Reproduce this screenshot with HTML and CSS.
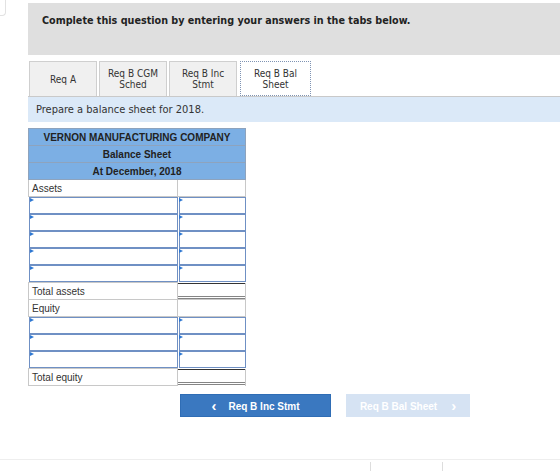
FILE: index.html
```html
<!DOCTYPE html>
<html lang="en">
<head>
  <meta charset="UTF-8">
  <title>Balance Sheet</title>
  <link rel="stylesheet" href="styles.css">
</head>
<body>

  <div class="page">
    <div class="stub"></div>

    <div class="main">
      <div class="question">Complete this question by entering your answers in the tabs below.</div>

      <div class="tabs">
        <div class="tab">Req A</div>
        <div class="tab">Req B CGM<br>Sched</div>
        <div class="tab">Req B Inc<br>Stmt</div>
        <div class="tab active">Req B Bal<br>Sheet</div>
      </div>

      <div class="instruction">Prepare a balance sheet for 2018.</div>

      <table class="sheet">
        <thead>
          <tr><th colspan="2">VERNON MANUFACTURING COMPANY</th></tr>
          <tr><th colspan="2">Balance Sheet</th></tr>
          <tr><th colspan="2">At December, 2018</th></tr>
        </thead>
        <tbody>
          <tr><td class="label">Assets</td><td class="blank"></td></tr>
          <tr><td class="field"><input type="text"></td><td class="field"><input type="text"></td></tr>
          <tr><td class="field"><input type="text"></td><td class="field"><input type="text"></td></tr>
          <tr><td class="field"><input type="text"></td><td class="field"><input type="text"></td></tr>
          <tr><td class="field"><input type="text"></td><td class="field"><input type="text"></td></tr>
          <tr><td class="field"><input type="text"></td><td class="field"><input type="text"></td></tr>
          <tr><td class="label">Total assets</td><td class="total"><input type="text" readonly></td></tr>
          <tr><td class="label">Equity</td><td class="blank"></td></tr>
          <tr><td class="field"><input type="text"></td><td class="field"><input type="text"></td></tr>
          <tr><td class="field"><input type="text"></td><td class="field"><input type="text"></td></tr>
          <tr><td class="field"><input type="text"></td><td class="field"><input type="text"></td></tr>
          <tr><td class="label">Total equity</td><td class="total"><input type="text" readonly></td></tr>
        </tbody>
      </table>

      <div class="nav">
        <button class="btn prev" type="button"><span class="chev">&lsaquo;</span>Req B Inc Stmt</button>
        <button class="btn next" type="button" disabled>Req B Bal Sheet<span class="chev">&rsaquo;</span></button>
      </div>
    </div>
  </div>

  <div class="footer">
    <div class="cell wide"></div>
    <div class="cell"></div>
    <div class="cell"></div>
  </div>

</body>
</html>
```

FILE: styles.css
```css
body {
  margin: 0;
  font-family: "DejaVu Sans Condensed", "DejaVu Sans", sans-serif;
  color: #222;
  background-color: #fff;
}

.page {
  display: flex;
  align-items: flex-start;
}

.stub {
  flex: none;
  width: 5px;
  height: 15px;
  border-right: 1px solid #e2e2e2;
  border-bottom: 1px solid #e2e2e2;
  border-radius: 0 0 4px 0;
}

.main {
  flex: 1;
  margin-left: 22px;
  margin-top: 3px;
}

.question {
  height: 52px;
  box-sizing: border-box;
  padding: 11px 14px;
  background-color: #dfdfdf;
  font-size: 10.7px;
  font-weight: bold;
}

.tabs {
  display: flex;
  gap: 2px;
  margin-top: 6px;
  padding-left: 1px;
}

.tab {
  width: 68px;
  height: 35px;
  box-sizing: border-box;
  display: flex;
  align-items: center;
  justify-content: center;
  text-align: center;
  font-size: 10px;
  line-height: 11px;
  color: #333;
  background-color: #f0f0f0;
  border: 1px solid #cfcfcf;
  border-bottom: none;
}

.tab.active {
  width: 71px;
  margin-left: 1px;
  background-color: #fff;
  border: 1px dotted #7f93b3;
}

.instruction {
  height: 26px;
  box-sizing: border-box;
  padding: 6px 8px;
  background-color: #dbe9f8;
  border-top: 1px solid #c9c9c9;
  font-size: 11px;
  color: #333;
}

.sheet {
  margin-top: 6px;
  border-collapse: collapse;
  font-family: "Liberation Sans", Arial, sans-serif;
  font-size: 10px;
}

.sheet th {
  height: 16px;
  padding: 0;
  background-color: #7cafe4;
  border: 1px solid #8ea3bd;
  font-weight: bold;
  color: #222;
}

.sheet td {
  padding: 0;
  height: 16px;
}

.sheet .label {
  width: 145px;
  padding-left: 3px;
  border: 1px solid #c8c8c8;
  color: #333;
}

.sheet .blank {
  width: 67px;
  border: 1px solid #c8c8c8;
}

.sheet .field {
  position: relative;
}

.sheet .field::before {
  content: "";
  position: absolute;
  left: 1px;
  top: 1px;
  border-left: 4px solid #2f78d2;
  border-top: 2.5px solid transparent;
  border-bottom: 2.5px solid transparent;
}

.sheet input {
  display: block;
  width: 100%;
  height: 17px;
  box-sizing: border-box;
  margin: 0;
  border: 1px solid #6f90c4;
  background-color: #fff;
}

.sheet .field + .field input {
  margin-left: 1px;
  width: calc(100% - 1px);
}

.sheet .total {
  border-left: 1px solid #c8c8c8;
  border-right: 1px solid #c8c8c8;
}

.sheet .total input {
  height: 16px;
  border: none;
  border-top: 1px solid #333;
  border-bottom: 3px double #858585;
}

.nav {
  display: flex;
  gap: 15px;
  margin-top: 8px;
  padding-left: 152px;
}

.btn {
  height: 23px;
  padding: 0;
  font-family: "Liberation Sans", Arial, sans-serif;
  font-size: 10px;
  font-weight: bold;
  color: #fff;
  border: 1px solid #2f6db5;
  background-color: #3a78c0;
}

.btn.prev {
  width: 151px;
}

.btn.next {
  width: 124px;
  border-color: #d6e3f3;
  background-color: #d6e3f3;
}

.chev {
  font-size: 15px;
  vertical-align: -1px;
}

.prev .chev {
  margin-right: 12px;
}

.next .chev {
  margin-left: 14px;
}

.footer {
  display: flex;
  margin-top: 42px;
  height: 11px;
  border-top: 1px solid #eeeeee;
}

.footer .cell {
  width: 71px;
  border-left: 1px solid #dddddd;
  margin-top: 2px;
}

.footer .wide {
  width: 370px;
  border-left: none;
}
```
